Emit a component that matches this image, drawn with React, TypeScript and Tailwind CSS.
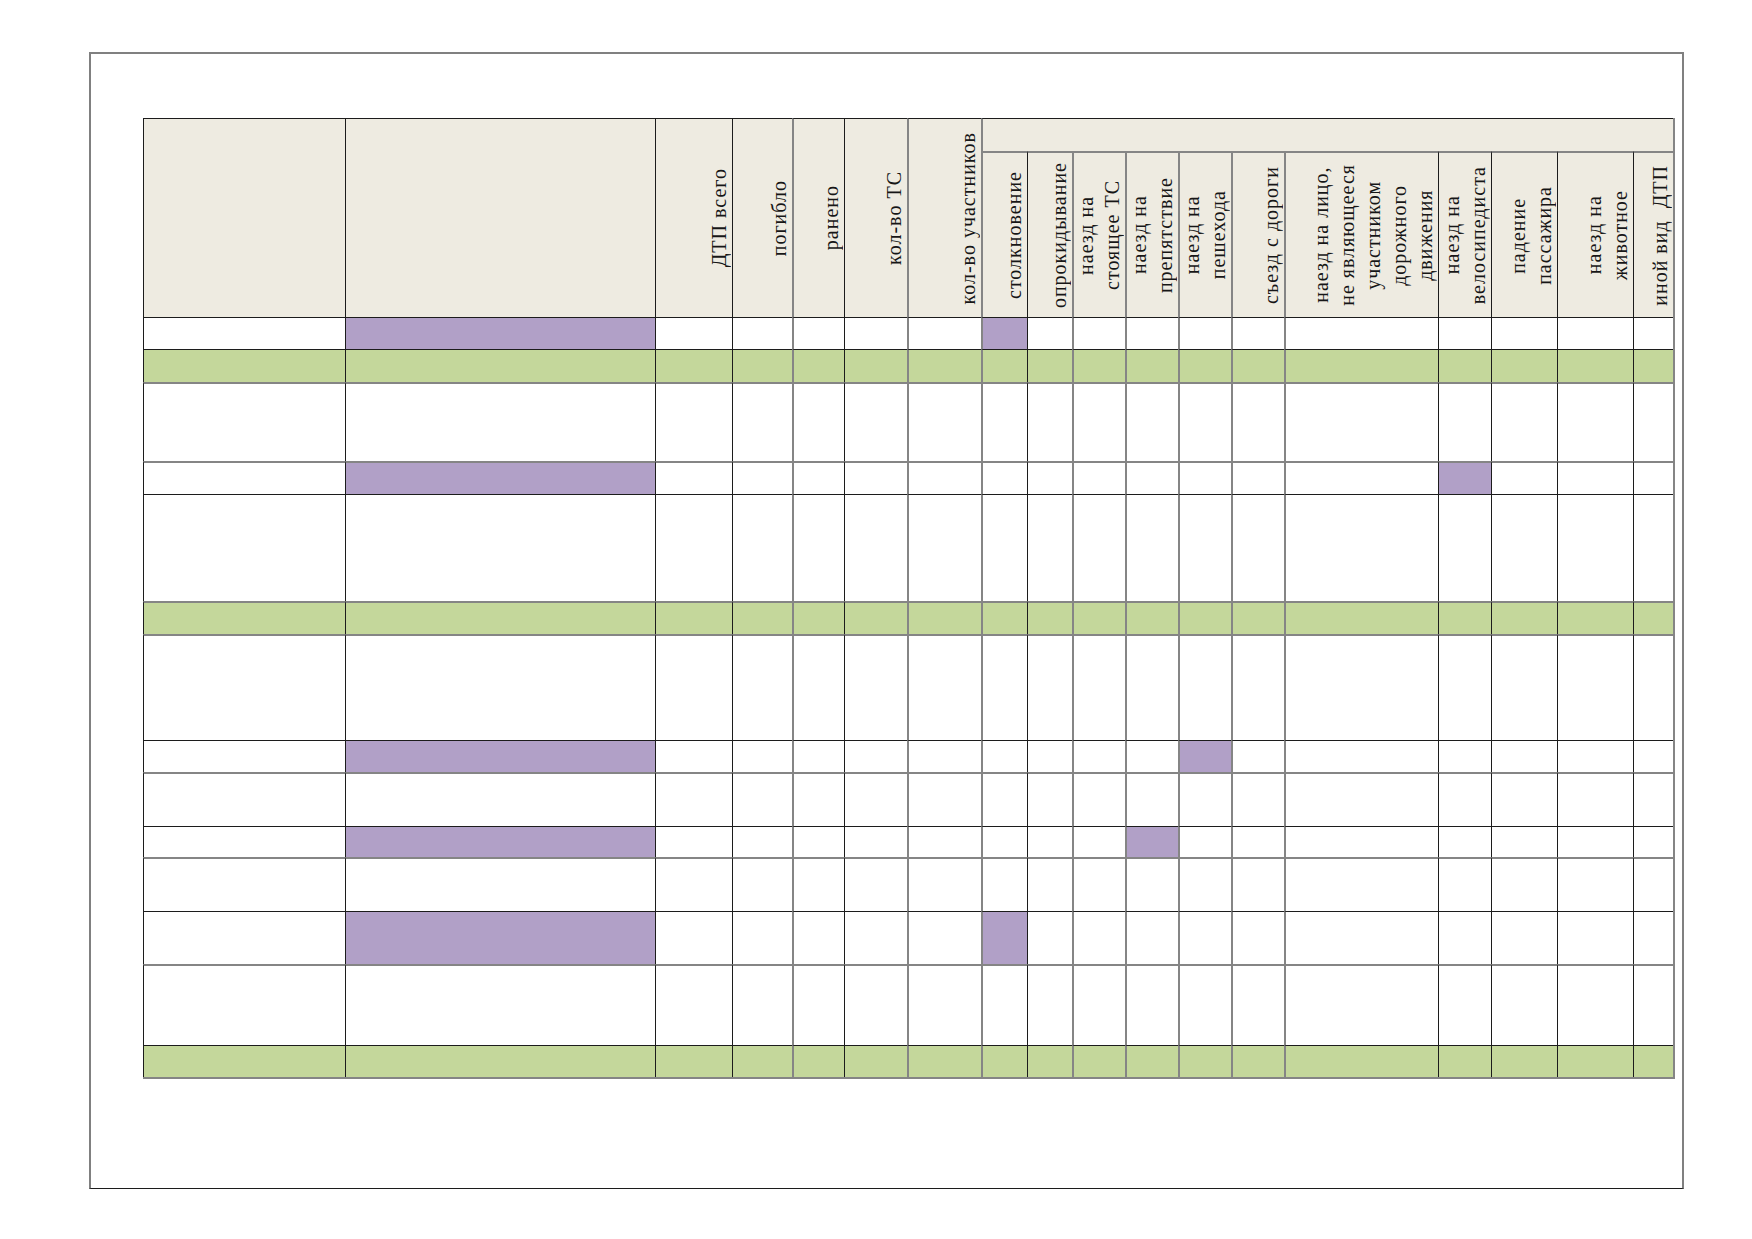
import React from "react";

const GRID =
  "grid grid-cols-[202px_310px_77px_60px_52px_63px_74px_46px_45px_53px_53px_53px_53px_154px_53px_66px_76px_40px]";

const K = "border-l border-l-[#1c1c1c]";
const G = "border-l-2 border-l-[#858585]";
const VL = [K, K, K, K, G, K, G, G, K, G, G, G, G, G, K, K, K, K];

const KT = "border-t border-t-[#1c1c1c]";
const GT = "border-t-2 border-t-[#858585]";

const HEAD_BG = "bg-[#eeebe1]";
const PURPLE = "bg-[#b1a0c7]";
const GREEN = "bg-[#c4d79b]";

type Row = { h: string; top: string; green?: boolean; purple?: number[] };

const ROWS: Row[] = [
  { h: "h-[32px]", top: KT, purple: [1, 7] },
  { h: "h-[33px]", top: KT, green: true },
  { h: "h-[79px]", top: GT },
  { h: "h-[33px]", top: GT, purple: [1, 14] },
  { h: "h-[107px]", top: KT },
  { h: "h-[33px]", top: GT, green: true },
  { h: "h-[106px]", top: GT },
  { h: "h-[32px]", top: KT, purple: [1, 11] },
  { h: "h-[54px]", top: GT },
  { h: "h-[31px]", top: KT, purple: [1, 10] },
  { h: "h-[54px]", top: GT },
  { h: "h-[53px]", top: KT, purple: [1, 7] },
  { h: "h-[81px]", top: GT },
  { h: "h-[32px]", top: KT, green: true },
];

const MAIN_HEADS: string[][] = [
  [],
  [],
  ["ДТП всего"],
  ["погибло"],
  ["ранено"],
  ["кол-во ТС"],
  ["кол-во участников"],
];

const SUB_HEADS: string[][] = [
  ["столкновение"],
  ["опрокидывание"],
  ["наезд на", "стоящее ТС"],
  ["наезд на", "препятствие"],
  ["наезд на", "пешехода"],
  ["съезд с дороги"],
  ["наезд на лицо,", "не являющееся", "участником", "дорожного", "движения"],
  ["наезд на", "велосипедиста"],
  ["падение", "пассажира"],
  ["наезд на", "животное"],
  ["иной вид\u00a0\u00a0ДТП"],
];

function VLabel({ lines }: { lines: string[] }) {
  if (lines.length === 0) return null;
  return (
    <div className="flex h-full items-center justify-end">
      <div className="[writing-mode:vertical-rl] rotate-180 whitespace-nowrap text-center leading-[26px] tracking-[1px]">
        {lines.map((l, i) => (
          <React.Fragment key={i}>
            {l}
            {i < lines.length - 1 && <br />}
          </React.Fragment>
        ))}
      </div>
    </div>
  );
}

export default function App() {
  return (
    <div className="min-h-[1239px] w-full bg-white pl-[89px] pt-[52px] font-['Liberation_Serif','Times_New_Roman',serif] text-[20px] text-[#161616]">
      <div className="h-[1137px] w-[1595px] border-x-2 border-t-2 border-b border-x-[#808080] border-t-[#808080] border-b-[#1c1c1c] pl-[52px] pt-[64px]">
        <div className="w-fit border-b-2 border-r-2 border-b-[#858585] border-r-[#858585]">
          {/* header */}
          <div className={`${GRID} grid-rows-[33px_166px]`}>
            {MAIN_HEADS.map((lines, i) => (
              <div key={i} className={`row-span-2 ${HEAD_BG} ${KT} ${VL[i]}`}>
                <VLabel lines={lines} />
              </div>
            ))}
            <div className={`col-span-11 ${HEAD_BG} ${KT} ${VL[7]}`} />
            {SUB_HEADS.map((lines, j) => (
              <div key={j} className={`${HEAD_BG} ${GT} ${VL[j + 7]}`}>
                <VLabel lines={lines} />
              </div>
            ))}
          </div>
          {/* body */}
          {ROWS.map((r, ri) => (
            <div key={ri} className={`${GRID} ${r.h}`}>
              {VL.map((vl, ci) => {
                const bg = r.green
                  ? GREEN
                  : r.purple && r.purple.includes(ci)
                  ? PURPLE
                  : "bg-white";
                return <div key={ci} className={`${bg} ${r.top} ${vl}`} />;
              })}
            </div>
          ))}
        </div>
      </div>
    </div>
  );
}
